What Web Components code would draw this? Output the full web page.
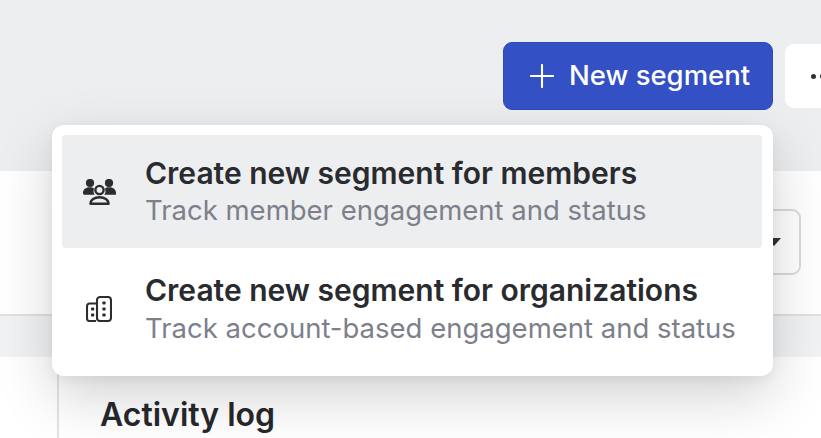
<!DOCTYPE html>
<html><head><meta charset="utf-8"><style>
html,body{margin:0;padding:0;width:821px;height:438px;overflow:hidden;background:#fff;font-family:Inter,"Liberation Sans",sans-serif}
</style></head><body>
<seg-page>
  <seg-header slot="header"></seg-header>
  <seg-content slot="content"></seg-content>
  <seg-menu slot="overlay">
    <seg-item active title-text="Create new segment for members" sub="Track member engagement and status" icon="members"></seg-item>
    <seg-item title-text="Create new segment for organizations" sub="Track account-based engagement and status" icon="org"></seg-item>
  </seg-menu>
</seg-page>
<script>
function def(name,html,init){customElements.define(name,class extends HTMLElement{constructor(){super();const r=this.attachShadow({mode:'open'});r.innerHTML=html;if(init)init(this,r);}});}
def('seg-page',`<style>:host{display:block;position:relative;width:821px;height:438px;overflow:hidden}
.ov{position:absolute;left:52px;top:125px}</style><slot name="header"></slot><slot name="content"></slot><div class="ov"><slot name="overlay"></slot></div>`);
def('seg-header',`<style>:host{display:flex;box-sizing:border-box;height:171px;background:#eceef0;padding:42px 0 0 503px;gap:12px;align-items:flex-start}
.new{position:relative;z-index:2;box-sizing:border-box;width:270px;height:68px;flex:none;background:#3350c4;border:1px solid #3049b8;border-radius:9px;color:#fff;display:flex;align-items:center;padding-left:26px;gap:15px;font:500 27.5px/64px Inter,sans-serif}
.new span{position:relative;top:-1px}
.more{position:relative;z-index:2;box-sizing:border-box;width:60px;height:64px;flex:none;margin-top:2px;background:#fff;border-radius:9px 0 0 9px;display:flex;align-items:center;padding-left:26px;gap:4px}
.more i{width:5px;height:5px;border-radius:50%;background:#2f3136}
svg{display:block;flex:none}</style>
<div class="new"><svg width="24" height="24" viewBox="0 0 24 24"><path d="M12 1v22M1 12h22" stroke="#fff" stroke-width="2.1" stroke-linecap="round"/></svg><span>New segment</span></div>
<div class="more"><i></i><i></i></div>`);
def('seg-content',`<style>:host{display:block;height:267px;background:#fff;font-family:Inter,sans-serif}
.filters{height:143px;box-sizing:border-box;padding:38px 20px 0 0;display:flex;justify-content:flex-end}
.select{box-sizing:border-box;width:120px;height:66px;border:2px solid #d9dbdf;border-radius:9px;background:#fff;display:flex;align-items:center;justify-content:flex-end;padding-right:18px}
.caret{width:0;height:0;border:7px solid transparent;border-top:8px solid #303236;border-bottom:0}
.bar{height:43px;box-sizing:border-box;background:#f1f2f4;border-top:2px solid #dfe1e4}
.body{padding-left:57px}
.panel{border-left:2px solid #e2e3e6;padding:36px 0 0 41px;height:120px;box-sizing:border-box}
h2{margin:0;font:600 32px/44px Inter,sans-serif;color:#26282c}</style>
<div class="filters"><div class="select"><span class="caret"></span></div></div>
<div class="bar"></div>
<div class="body"><div class="panel"><h2>Activity log</h2></div></div>`);
def('seg-menu',`<style>:host{display:flex;flex-direction:column;box-sizing:border-box;width:721px;height:251px;padding:10px 11px 10px 10px;background:#fff;border-radius:12px;box-shadow:0 20px 56px rgba(0,0,0,.18),0 4px 12px rgba(0,0,0,.05)}</style><slot></slot>`);
const icons={members:`<svg width="33" height="26" viewBox="0 0 33 26" fill="#2b2d31"><circle cx="7" cy="4" r="4.100"/><circle cx="26" cy="4" r="4.100"/><path d="M0 14c0-3.600 2.700-5.800 6.700-5.800 1.800 0 3.300.4 4.400 1.300a6.900 6.900 0 0 0 .5 6.300H1.600C.6 15.800 0 15 0 14zM33 14c0-3.600-2.700-5.800-6.700-5.800-1.800 0-3.300.4-4.400 1.300a6.900 6.900 0 0 1-.5 6.300h10.800c1 0 1.800-.8 1.800-1.800z"/><circle cx="16.500" cy="11" r="4.100" fill="none" stroke="#2b2d31" stroke-width="2.400"/><path d="M7.500 24.700c0-4 4-6.500 9-6.500s9 2.500 9 6.500z" fill="none" stroke="#2b2d31" stroke-width="2.400" stroke-linejoin="round"/></svg>`,
org:`<svg width="26" height="26" viewBox="0 0 26 26" fill="none" stroke="#2b2d31" stroke-width="2.100"><path d="M10 7.500H3.600A2.600 2.600 0 0 0 1 10.100v12.300A2.600 2.600 0 0 0 3.600 25H10"/><rect x="11" y="1" width="14" height="24" rx="3"/><g fill="#2b2d31" stroke="none"><rect x="5" y="11.500" width="3.200" height="3" rx=".8"/><rect x="5" y="17.500" width="3.200" height="3" rx=".8"/><rect x="16.400" y="5.500" width="3.200" height="3" rx=".8"/><rect x="16.400" y="11.500" width="3.200" height="3" rx=".8"/><rect x="16.400" y="17.500" width="3.200" height="3" rx=".8"/></g></svg>`};
def('seg-item',`<style>:host{display:flex;align-items:center;box-sizing:border-box;width:700px;height:113px;border-radius:4px;font-family:Inter,sans-serif;padding-left:20px}
:host([active]){background:#eceef0}
:host(:not([active])){height:118px;padding-top:4px}
:host([active]) .s{margin-top:3px}
.ic{width:34px;height:34px;display:flex;align-items:center;justify-content:center;margin-right:29px;flex:none}
.t{font:600 30px/34px Inter,sans-serif;color:#292b2f;white-space:nowrap}
.s{font:400 27.500px/34px Inter,sans-serif;color:#7d808b;white-space:nowrap;margin-top:4px}
</style><div class="ic"></div><div><div class="t"></div><div class="s"></div></div>`,(h,r)=>{
 r.querySelector('.t').textContent=h.getAttribute('title-text');
 r.querySelector('.s').textContent=h.getAttribute('sub');
 r.querySelector('.ic').innerHTML=icons[h.getAttribute('icon')];
});
</script>
</body></html>
